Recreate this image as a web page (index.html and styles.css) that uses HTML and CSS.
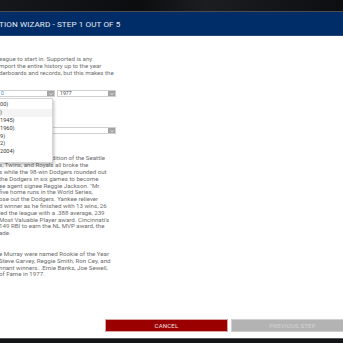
FILE: index.html
```html
<!DOCTYPE html>
<html>
<head>
<meta charset="utf-8">
<link rel="stylesheet" href="styles.css">
</head>
<body>
<div class="screen">
  <div class="topbar"></div>
  <div class="header"><span class="title">TION WIZARD - STEP 1 OUT OF 5</span></div>
  <div class="content">
    <p class="intro">eague to start in. Supported is any<br>mport the entire history up to the year<br>derboards and records, but this makes the</p>
    <div class="select-row">
      <div class="select select-era focused"><span class="value">0</span><span class="arrow"><svg viewBox="0 0 8 8" width="7" height="7"><path d="M2 3 L4 5 L6 3" fill="none" stroke="#fff" stroke-width="1"/></svg></span></div>
      <div class="select select-year"><span class="value">1977</span><span class="arrow"><svg viewBox="0 0 8 8" width="7" height="7"><path d="M2 3 L4 5 L6 3" fill="none" stroke="#fff" stroke-width="1"/></svg></span></div>
    </div>
    <div class="select select-wide"><span class="value"></span><span class="arrow"><svg viewBox="0 0 8 8" width="7" height="7"><path d="M2 3 L4 5 L6 3" fill="none" stroke="#fff" stroke-width="1"/></svg></span></div>
    <p class="history">season after the addition of the Seattle<br>s, Twins, and Royals all broke the<br>s while the 98-win Dodgers rounded out<br>the Dodgers in six games to become<br>ee agent signee Reggie Jackson. "Mr.<br>five home runs in the World Series,<br>ose out the Dodgers. Yankee reliever<br>d winner as he finished with 13 wins, 26<br>led the league with a .388 average, 239<br>Most Valuable Player award. Cincinnati's<br>149 RBI to earn the NL MVP award, the<br>ade.</p>
    <p class="history">e Murray were named Rookie of the Year<br>Steve Garvey, Reggie Smith, Ron Cey, and<br>nnant winners...Ernie Banks, Joe Sewell,<br>of Fame in 1977.</p>

    <ul class="dropdown">
      <li>00)</li>
      <li class="hover">)</li>
      <li>1945)</li>
      <li>1960)</li>
      <li>9)</li>
      <li>2)</li>
      <li>2004)</li>
    </ul>
  </div>
  <div class="footer">
    <button class="btn btn-cancel">CANCEL</button>
    <button class="btn btn-prev">PREVIOUS STEP</button>
  </div>
  <div class="bottombar"></div>
</div>
</body>
</html>
```
FILE: styles.css
```css
html, body {
  margin: 0;
  padding: 0;
  width: 343px;
  height: 343px;
  overflow: hidden;
  background: #fff;
}
.screen {
  display: flex;
  flex-direction: column;
  width: 343px;
  height: 343px;
  font-family: Roboto, "Liberation Sans", sans-serif;
}
.topbar {
  height: 11px;
  background: linear-gradient(90deg, #15171a 0%, #0c0d0f 40%, #1b1d20 60%, #0d0e10 100%);
  border-bottom: 1px solid #4b4d50;
}
.header {
  height: 23px;
  background: #002c67;
  border-bottom: 1px solid #24456f;
  display: flex;
  align-items: center;
  padding-left: 0;
}
.title {
  color: #e9edf3;
  font-size: 8.1px;
  letter-spacing: 0.1px;
  margin-left: -1px;
  padding-top: 1px;
}
.content {
  position: relative;
  flex: 1;
  padding-top: 20px;
}
p {
  margin: 0;
  white-space: nowrap;
  color: #6e6e6e;
  font-size: 6.15px;
  line-height: 6.8px;
  margin-left: -1px;
}
.select-row {
  display: flex;
  gap: 2px;
  margin-top: 14px;
}
.select {
  display: flex;
  height: 7px;
  border: 1px solid #d0d0d0;
  box-sizing: border-box;
  background: #fff;
  margin-left: -1px;
}
.select-year { margin-left: 0; }
.select .value {
  flex: 1;
  font-size: 5.2px;
  line-height: 5px;
  color: #444;
  padding-left: 1px;
}
.focused .value { color: #4d8fd6; }
.select .arrow {
  width: 7px;
  background: #a4a4a4;
  display: flex;
  align-items: center;
  justify-content: center;
}
.select .arrow svg { display: block; width: 6px; height: 6px; }
.select-era { width: 56px; }
.select-year { width: 59px; padding-left: 1px; }
.select-wide { width: 117px; margin-top: 30px; }
.content .history { margin-top: 21px; }
.content .history + .history { margin-top: 14px; }
.dropdown {
  position: absolute;
  left: -1px;
  top: 62px;
  width: 54px;
  margin: 0;
  padding: 2px 0 6px;
  list-style: none;
  background: #fff;
  border: 1px solid #d6d6d6;
  box-shadow: 1px 2px 3px rgba(0,0,0,0.25);
  box-sizing: border-box;
}
.dropdown li {
  height: 7.9px;
  line-height: 7.9px;
  font-size: 5.6px;
  color: #3a3a3a;
  padding-left: 0;
}
.dropdown li.hover { background: #f4f4f4; }
.footer {
  display: flex;
  gap: 3px;
  padding-left: 105px;
  margin-bottom: 6px;
}
.btn {
  flex: 0 0 123px;
  height: 13px;
  padding: 0;
  font-family: Roboto, "Liberation Sans", sans-serif;
  font-size: 6px;
  letter-spacing: 0.2px;
  box-sizing: border-box;
}
.btn-cancel {
  background: #9a0000;
  color: #f3e6e6;
  border: 1px solid #d9a5a5;
}
.btn-prev {
  background: #b3b3b3;
  color: #d4d4d4;
  border: 1px solid #cfcfcf;
}
.bottombar {
  height: 4px;
  background: #121416;
  border-top: 1px solid #55585c;
}
```
